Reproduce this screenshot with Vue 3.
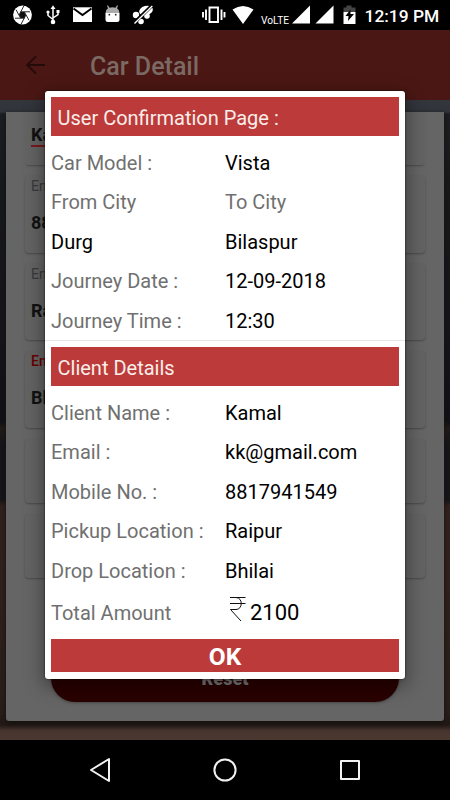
<script setup>
const trip = [
  ['Car Model :', 'Vista'],
  ['From City', 'To City', 'both'],
  ['Durg', 'Bilaspur', 'dark'],
  ['Journey Date :', '12-09-2018'],
  ['Journey Time :', '12:30'],
]
const client = [
  ['Client Name :', 'Kamal'],
  ['Email :', 'kk@gmail.com'],
  ['Mobile No. :', '8817941549'],
  ['Pickup Location :', 'Raipur'],
  ['Drop Location :', 'Bhilai'],
]
</script>

<template>
  <div class="screen">
    <header class="status">
      <svg class="sysicons" width="450" height="30" viewBox="0 0 450 30" fill="#fff">
        <circle cx="22.5" cy="15" r="9.4" />
        <path d="M20.800 12h3.400l1.700 3-1.700 3h-3.400l-1.700-3z" fill="#111" />
        <path d="M20.500 11.800h9.500M24.300 11.800l4.700 8.500M25.900 15l-4.700 9M24.500 18.200H15M20.700 18.200 16 9.700M19.100 15l4.700-9" fill="none" stroke="#111" stroke-width=".9" />
        <path d="M53 8v13M48 12v3.500l5 4M58 12v2.500l-5 3.500" stroke="#fff" stroke-width="1.500" fill="none" />
        <path d="M50.500 9 53 5.300 55.500 9zM56.500 10h3v3h-3z" />
        <circle cx="48" cy="12" r="1.600" /><circle cx="53" cy="22" r="2.300" />
        <path d="M73 7.300h19v14.700H73z" />
        <path d="M73.500 8.500 82.500 15 91.500 8.500" stroke="#000" stroke-width="1.900" fill="none" />
        <path d="M105.500 13h14v6.500a2.500 2.500 0 0 1-2.500 2.500h-9a2.500 2.500 0 0 1-2.500-2.500z" />
        <path d="M105.500 13q.3-3.500 2.500-4.800L107 5.700l.8-.5 1.800 2.500q3-1 5.800 0L117.200 5.200l.8.5-1 2.500q2.200 1.300 2.500 4.800z" fill="#aaa" />
        <circle cx="109.300" cy="14.700" r=".9" fill="#222" /><circle cx="115.700" cy="14.700" r=".9" fill="#222" />
        <ellipse cx="146" cy="10.600" rx="7" ry="4.700" transform="rotate(-15 146 10.600)" />
        <circle cx="136" cy="15" r="3.200" /><circle cx="141" cy="21.500" r="2.800" /><circle cx="147" cy="16" r="2.800" />
        <path d="M133.500 23.500 151.500 6" stroke="#000" stroke-width="3.400" /><path d="M134.500 23.500 152.300 6" stroke="#fff" stroke-width="1.400" />
        <path d="M209.500 7.500h8.500v14.500h-8.500zM206 9.500v10.500M203 12v5.500M221.500 9.500v10.500M224.500 12v5.500" fill="none" stroke="#fff" stroke-width="1.900" />
        <path d="M232.500 9.500Q243 2.500 253.500 9.500L243 24z" />
        <path d="M292 23.500h18V5.500zM315.500 23.500h18V5.500z" />
        <path d="M343.500 12V7.500h3V5.500h5v2h4V12z" fill="#444" /><path d="M343.500 12h12v12h-12z" />
        <path d="M350.500 9.500 345.500 16h3l-.5 5 6-7h-3.500z" fill="#000" />
      </svg>
      <span class="volte">VoLTE</span>
      <span class="clock">12:19 PM</span>
    </header>
    <div class="appbar">
      <svg width="24" height="24" viewBox="0 0 24 24"><path d="M21 12H3M12 3.300 3 12 12 20.700" fill="none" stroke="#240b09" stroke-width="1.800" /></svg>
      <h1>Car Detail</h1>
    </div>
    <main class="page">
      <section class="sheet">
        <div class="field first"><b class="under">Ka</b></div>
        <div class="field tall"><small>En</small><b>88</b></div>
        <div class="field tall"><small>En</small><b>Ra</b></div>
        <div class="field tall"><small class="active">En</small><b>Bl</b></div>
        <div class="field short"></div>
        <div class="field short last"></div>
        <div class="reset">Reset</div>
      </section>
    </main>
    <nav class="nav">
      <svg width="450" height="60" viewBox="0 0 450 60" fill="none" stroke="#f2f2f2" stroke-width="2" stroke-linejoin="round">
        <path d="M109 19v22L91 30z" /><circle cx="225" cy="30" r="10.600" /><path d="M341 21h18v18h-18z" />
      </svg>
    </nav>
    <section class="dialog">
      <h2>User Confirmation Page :</h2>
      <div class="rows">
        <div v-for="r in trip" :key="r[0]" class="row" :class="r[2]"><span>{{ r[0] }}</span><span class="value">{{ r[1] }}</span></div>
      </div>
      <h2 class="second">Client Details</h2>
      <div class="rows plain">
        <div v-for="r in client" :key="r[0]" class="row"><span>{{ r[0] }}</span><span class="value">{{ r[1] }}</span></div>
      </div>
      <div class="row total">
        <span>Total Amount</span>
        <span class="value amount">
          <svg width="25" height="28" viewBox="0 0 25 28" fill="none" stroke="#111" stroke-width="1"><path d="M5 2.500h15.500M5 8.500h15.500M5 2.500h6c7 0 7 12 0 12H5.500L16 26" /></svg>2100
        </span>
      </div>
      <button class="ok">OK</button>
    </section>
  </div>
</template>

<style>
body { margin: 0; background: #000; }
</style>
<style scoped>
.screen { position: relative; width: 450px; height: 800px; overflow: hidden; display: flex; flex-direction: column; font-family: Roboto, sans-serif; background: #000; }
.status { position: relative; height: 30px; color: #fff; flex: none; }
.sysicons { display: block; }
.volte { position: absolute; left: 261px; top: 14px; font-size: 10.200px; line-height: 14px; }
.clock { position: absolute; left: 364.500px; top: 5px; font-size: 17.400px; line-height: 22px; font-weight: 500; white-space: nowrap; }
.appbar { height: 70px; flex: none; background: #4b1714; display: flex; align-items: center; padding-left: 24px; gap: 42px; }
.appbar h1 { margin: 3px 0 0; font-size: 25px; font-weight: 500; color: #7b6963; line-height: 30px; }
.page { height: 640px; flex: none; box-sizing: border-box; padding: 12px 6px 0; background: linear-gradient(#33363d 0, #303339 12px, #1b1e22 14px, #16181b 100px, #14151a 240px, #101116 322px, #211a18 328px, #15151a 345px, #15151a 400px, #30211e 406px, #30211e 450px, #291e1b 610px, #211916 625px, #49352f 631px, #4b3831 640px); }
.sheet { height: 609px; background: #656565; border-radius: 0 0 3px 3px; display: flex; flex-direction: column; align-items: center; box-shadow: 0 2px 4px #15100e; }
.field { width: 400px; box-sizing: border-box; border-radius: 4px; background: #636363; box-shadow: 0 1px 2px #4a4a4a; padding: 1px 6px 0; display: flex; flex-direction: column; flex: none; color: #111; font-size: 18px; }
.field small { font-size: 14px; line-height: 18px; color: #393939; }
.field small.active { color: #680000; font-weight: 500; }
.field b { line-height: 24px; margin-top: 16px; }
.field.first { height: 53px; border-radius: 0 0 4px 4px; box-shadow: 0 2px 2px -1px #4a4a4a; }
.field.first b { margin-top: 11px; align-self: flex-start; border-bottom: 2px solid #78191c; line-height: 21px; }
.tall { height: 76.500px; margin-top: 11px; }
.short { height: 64px; margin-top: 11px; }
.last { margin-top: 11px; }
.reset { width: 348px; height: 46px; margin-top: 78px; border-radius: 0 0 24px 24px; background: #290000; color: #777; text-align: center; font-size: 18px; line-height: 45px; font-weight: 900; box-shadow: 0 1px 3px #444; flex: none; }
.nav { height: 60px; flex: none; background: #000; }
.nav svg { display: block; }
.dialog { position: absolute; left: 45px; top: 91px; width: 360px; height: 588px; box-sizing: border-box; padding: 6px 6px 0; background: #fff; border-radius: 3px; box-shadow: 0 5px 18px 3px rgba(0,0,0,.35), 0 0 2px #111; }
.dialog h2 { margin: 0; height: 39px; padding: 2px 6px 0 6.500px; box-sizing: border-box; background: #bc3b3a; color: #fbeeea; font-size: 20px; line-height: 38px; font-weight: 400; }
.rows { height: 205px; box-sizing: border-box; padding-top: 7px; margin: 0 -6px; padding-left: 6px; border-bottom: 1px solid #e4e8e4; }
.rows.plain { height: 204px; border: 0; }
.dialog h2.second { margin-top: 6px; }
.row { display: flex; height: 39.400px; line-height: 40px; font-size: 20px; color: #707070; white-space: nowrap; }
.row > span:first-child { width: 174px; flex: none; }
.value { color: #000; }
.both .value { color: #707070; }
.dark { color: #000; }
.total { height: 49px; line-height: 46px; }
.amount { display: flex; font-size: 22px; line-height: 45px; }
.amount svg { margin-top: 5px; }
.ok { display: block; width: 348px; height: 33px; border: 0; padding: 3px 0 0; background: #bc3b3a; color: #fff; font: 700 24.500px/30px Roboto, sans-serif; }
</style>
